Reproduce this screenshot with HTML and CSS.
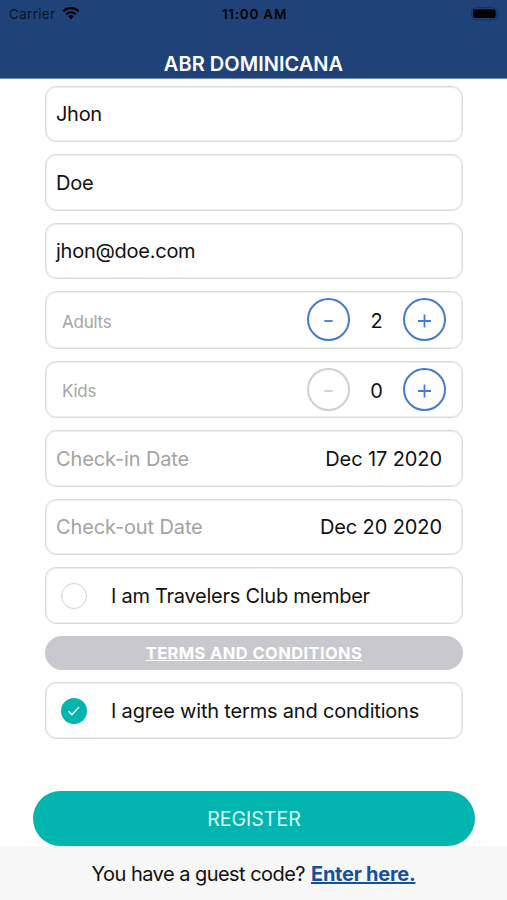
FILE: index.html
```html
<!DOCTYPE html>
<html lang="en">
    <head>
        <meta charset="utf-8">
        <meta name="viewport" content="width=device-width, initial-scale=1">
        <title>ABR Dominicana</title>
        <link rel="stylesheet" href="styles.css">
    </head>
    <body>
        <header class="header">
            <div class="status_bar">
                <div class="carrier">
                    <span>Carrier</span>
                    <svg class="wifi" viewBox="0 0 18 14" width="18" height="14">
                        <path d="M1.3 5.3a11 11 0 0 1 15.4 0M4.2 8.2a7 7 0 0 1 9.6 0" fill="none" stroke="#000" stroke-width="2.1"/>
                        <path d="M9 13.2L6.2 10.3a4 4 0 0 1 5.6 0z"/>
                    </svg>
                </div>
                <div class="clock">11:00 AM</div>
                <div class="battery">
                    <svg viewBox="0 0 29 14" width="29" height="14">
                        <rect x=".7" y=".7" width="25" height="12" rx="3.5" fill="none" stroke="#17335c" stroke-width="1"/>
                        <rect x="2" y="2.3" width="22.6" height="8.8" rx="2"/>
                        <path d="M27 4.8q1.4.6 1.4 2T27 8.8z" fill="#17335c"/>
                    </svg>
                </div>
            </div>
            <h1 class="title">ABR DOMINICANA</h1>
        </header>

        <form class="form">
            <div class="field"><span class="first_name">Jhon</span></div>
            <div class="field tall"><span class="last_name">Doe</span></div>
            <div class="field"><span class="email">jhon@doe.com</span></div>
            <div class="field counter">
                <span class="counter_label">Adults</span>
                <button type="button" class="round_button"><svg viewBox="0 0 43 43"><path d="M17.3 23h8.4"/></svg></button>
                <span class="count">2</span>
                <button type="button" class="round_button"><svg viewBox="0 0 43 43"><path d="M15 23h13M21.5 16.5v13"/></svg></button>
            </div>
            <div class="field tall counter kids">
                <span class="counter_label">Kids</span>
                <button type="button" class="round_button disabled" disabled><svg viewBox="0 0 43 43"><path d="M17.3 23h8.4"/></svg></button>
                <span class="count">0</span>
                <button type="button" class="round_button"><svg viewBox="0 0 43 43"><path d="M15 23h13M21.5 16.5v13"/></svg></button>
            </div>
            <div class="field tall date">
                <span class="date_label">Check-in Date</span>
                <span class="date_value">Dec 17 2020</span>
            </div>
            <div class="field date">
                <span class="date_label">Check-out Date</span>
                <span class="date_value">Dec 20 2020</span>
            </div>
            <label class="field tall option">
                <span class="check"></span>
                <span class="member">I am Travelers Club member</span>
            </label>
            <a class="terms"><span>TERMS AND CONDITIONS</span></a>
            <label class="field tall option">
                <span class="check checked">
                    <svg viewBox="0 0 26 26" width="26" height="26"><path d="M7.5 13.3l3.4 3.4 7.1-7.7"/></svg>
                </span>
                <span class="agree">I agree with terms and conditions</span>
            </label>
            <button type="button" class="register">REGISTER</button>
        </form>

        <footer class="footer">
            <span class="question">You have a guest code?</span>
            <a class="enter">Enter here.</a>
        </footer>
    </body>
</html>
```
FILE: styles.css
```css
* {
    box-sizing: border-box;
}
body {
    margin: 0;
    height: 900px;
    display: flex;
    flex-direction: column;
    overflow: hidden;
    background: #fff;
    color: #111;
    font-family: Inter, "Liberation Sans", sans-serif;
    font-size: 20px;
    line-height: 26px;
    white-space: nowrap;
}
button {
    font: inherit;
    padding: 0;
    border: 0;
}

/* header */
.header {
    height: 79px;
    background: #1f4379;
    border-bottom: 1px solid #6f8dbb;
}
.status_bar {
    display: grid;
    grid-template-columns: 1fr auto 1fr;
    align-items: center;
    height: 28px;
    padding: 0 7px 0 9px;
    color: #000;
    font-size: 13.5px;
    line-height: 28px;
}
.carrier {
    display: flex;
    align-items: center;
    gap: 7px;
    color: #0a1420;
    letter-spacing: .3px;
}
.wifi {
    margin-top: -3px;
}
.clock {
    font-weight: 600;
    letter-spacing: .75px;
}
.battery {
    display: flex;
    justify-content: flex-end;
    margin-top: -1px;
}
.title {
    margin: 23px 0 0;
    color: #fff;
    font-size: 20px;
    font-weight: 600;
    line-height: 26px;
    text-align: center;
    letter-spacing: .03px;
}

/* form */
.form {
    display: flex;
    flex-direction: column;
    gap: 12px;
    height: 767px;
    padding: 7px 44px 0 45px;
}
.field {
    display: flex;
    align-items: center;
    height: 56px;
    flex-shrink: 0;
    padding: 0 20px 0 10px;
    border: 1px solid #dadada;
    /* softens the inside of the border */
    box-shadow: inset 0 0 0 1px #eee;
    border-radius: 11px;
}
.tall {
    height: 57px;
}
.first_name {
    letter-spacing: -.3px;
}
.last_name {
    letter-spacing: -.2px;
}
.email {
    letter-spacing: -.25px;
}
.counter {
    height: 58px;
    padding: 0 16px;
}
.kids {
    height: 57px;
}
.counter_label {
    margin-right: auto;
    padding-top: 3px;
    color: #a5a5a5;
    font-size: 17px;
    letter-spacing: -.25px;
}
.round_button {
    width: 43px;
    height: 43px;
    border: 2px solid #447bd0;
    border-radius: 50%;
    background: #fff;
    color: #447bd0;
}
.counter .round_button {
    margin-top: -1px;
}
.kids .round_button {
    margin-top: 0;
}
.round_button svg {
    display: block;
    margin: -2px;
    width: 43px;
    height: 43px;
    fill: none;
    stroke: currentColor;
    stroke-width: 1.8;
}
.disabled {
    border-color: #d0d0d0;
    color: #d0d0d0;
}
.count {
    width: 53px;
    padding-top: 2px;
    text-align: center;
}
.date {
    justify-content: space-between;
}
.date_label {
    color: #a3a3a3;
    letter-spacing: -.13px;
}
.date_value {
    letter-spacing: -.1px;
}
.option {
    padding: 0 15px;
    gap: 24px;
}
.check {
    width: 26px;
    height: 26px;
    border: 1.5px solid #d2d2d2;
    border-radius: 50%;
}
.checked {
    border: 0;
    background: #02b5ae;
}
.checked svg {
    display: block;
    fill: none;
    stroke: #fff;
    stroke-width: 1.4;
}
.member {
    letter-spacing: -.26px;
}
.agree {
    letter-spacing: -.19px;
}
.terms {
    display: block;
    height: 34px;
    border-radius: 17px;
    background: #c9c8ce;
    color: #fff;
    font-size: 16.5px;
    font-weight: 700;
    line-height: 34px;
    text-align: center;
    text-decoration: underline;
    text-decoration-skip-ink: none;
    letter-spacing: .4px;
}
.register {
    height: 55px;
    margin: 40px -12px 0;
    border-radius: 28px;
    background: #02b5ae;
    color: #d9fffa;
    font-size: 19.5px;
}

/* footer */
.footer {
    display: flex;
    justify-content: center;
    gap: 6px;
    height: 54px;
    padding-top: 15px;
    background: #f7f7f7;
}
.question {
    letter-spacing: -.54px;
}
.enter {
    color: #15519a;
    font-weight: 700;
    text-decoration: underline;
    text-decoration-skip-ink: none;
    letter-spacing: -.25px;
}
```
